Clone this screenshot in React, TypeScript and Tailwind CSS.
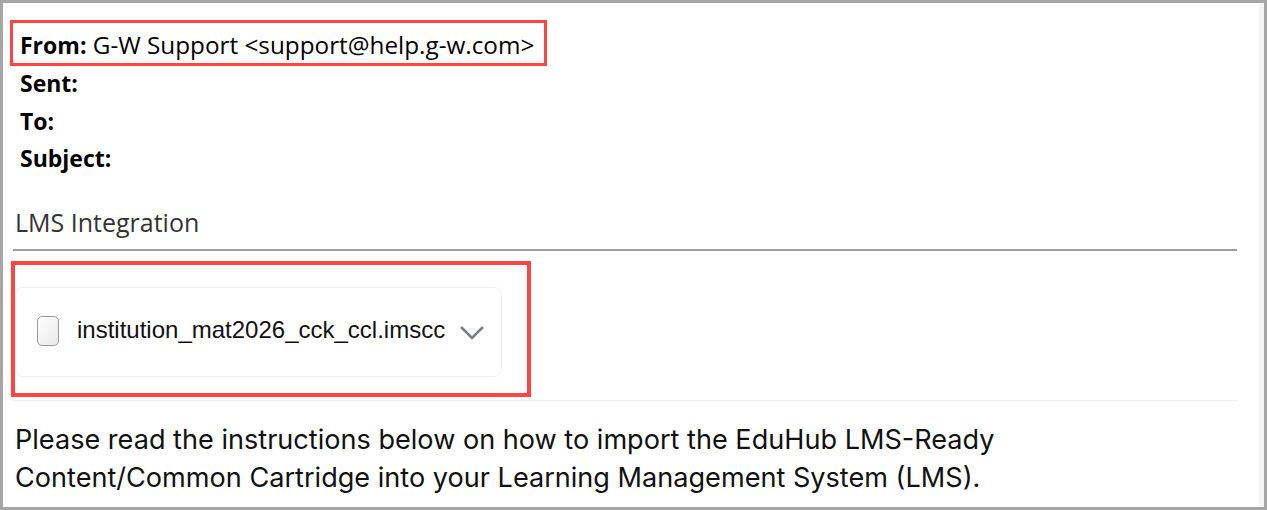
export default function App() {
  return (
    <div className="w-[1267px] h-[510px] overflow-hidden bg-white border-[3px] border-[#a6a6a6] border-r-0 flex">
      <div className="flex-1 min-w-0 pt-[17px] pl-[7px] font-['Open_Sans',sans-serif] text-black">
        {/* email header */}
        <div className="w-[537px] h-[46px] border-[3px] border-[#ff4444] pl-[7px] pt-[4px] flex items-center text-[24.3px]">
          <span className="whitespace-nowrap"><b className="font-bold text-[23px]">From:</b> G-W Support &lt;support@help.g-w.com&gt;</span>
        </div>
        <div className="pl-[10px] text-[23px] font-bold leading-[37.5px] -mt-[1px]">
          <div>Sent:</div>
          <div>To:</div>
          <div>Subject:</div>
        </div>

        <div className="ml-[3px] mr-[22px]">
          <div className="mt-[28px] h-[45px] border-b-2 border-[#a0a0a0] pl-[2px] text-[25px] leading-[32px] text-[#333]">LMS Integration</div>
        </div>

        {/* attachment */}
        <div className="mt-[10px] ml-[1px] w-[520px] h-[136px] border-[4px] border-[#ff4444] pt-[22px]">
          <div className="w-[487px] h-[90px] rounded-lg border border-[#f0f0f0] flex items-center pl-[21px] font-['Liberation_Sans',sans-serif]">
            <div className="w-[22px] h-[30px] mb-[1px] rounded-[5px] border border-[#9a9a9a] bg-gradient-to-br from-white to-[#e8e8e8]" />
            <span className="ml-[18px] mb-[4px] text-[24px] text-[#111] whitespace-nowrap">institution_mat2026_cck_ccl.imscc</span>
            <svg className="ml-[14px] mt-[2px]" width="26" height="16" viewBox="0 0 26 16" fill="none">
              <path d="M2 2l11 11L24 2" stroke="#7a7f80" strokeWidth="2.6" />
            </svg>
          </div>
        </div>

        <div className="ml-[3px] mr-[22px] mt-[3px] border-t border-[#eeeeee] pt-[20px] pl-[2px] font-['Inter',sans-serif] text-[27.1px] leading-[38px] text-[#111]">
          <p className="whitespace-nowrap">Please read the instructions below on how to import the EduHub LMS-Ready</p>
          <p className="whitespace-nowrap">Content/Common Cartridge into your Learning Management System (LMS).</p>
        </div>
      </div>

      {/* right edge */}
      <div className="w-[5px] bg-[#f5f5f5]" />
      <div className="w-[3px] bg-[#a6a6a6]" />
    </div>
  );
}
